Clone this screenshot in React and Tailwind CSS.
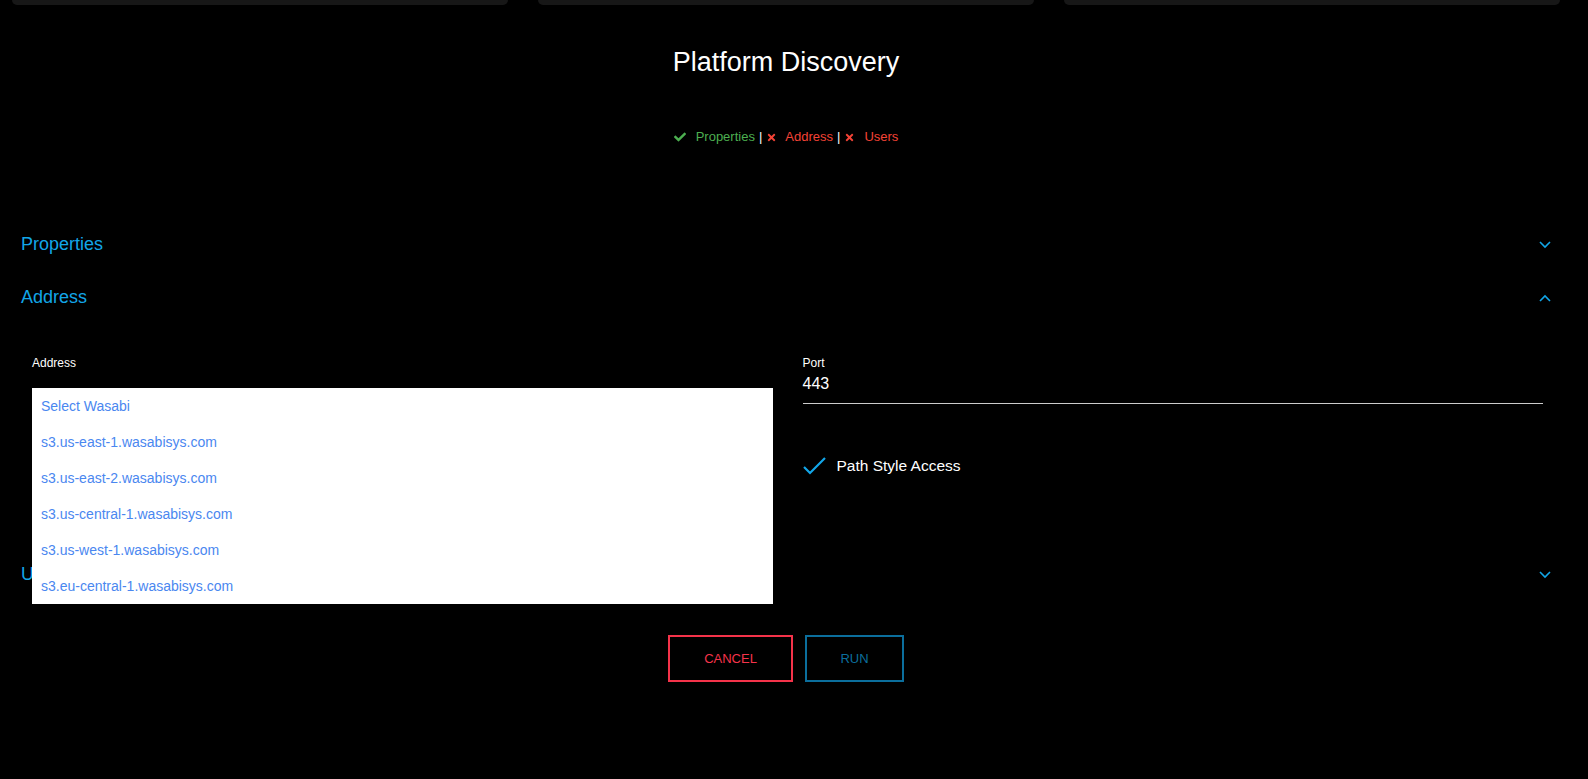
import { useState } from 'react'
import { FaCheck, FaTimes } from 'react-icons/fa'

const options = [
  'Select Wasabi',
  's3.us-east-1.wasabisys.com',
  's3.us-east-2.wasabisys.com',
  's3.us-central-1.wasabisys.com',
  's3.us-west-1.wasabisys.com',
  's3.eu-central-1.wasabisys.com',
]

const Chevron = ({ up }) => (
  <svg width="12" height="8" viewBox="0 0 12 8" className="text-[#12a6e8]">
    <polyline
      points={up ? '1,7 6,2 11,7' : '1,1 6,6 11,1'}
      fill="none"
      stroke="currentColor"
      strokeWidth="1.6"
    />
  </svg>
)

const SectionHeader = ({ title, open }) => (
  <div className="flex items-center justify-between h-[53px]">
    <span className="text-[18px] text-[#12a6e8]">{title}</span>
    <Chevron up={open} />
  </div>
)

const App = () => {
  const [pathStyle, setPathStyle] = useState(true)

  return (
    <div
      className="min-h-[779px] bg-black text-white overflow-hidden pr-[16px]"
      style={{ fontFamily: '"Liberation Sans", Arial, sans-serif' }}
    >
      <div className="flex gap-[30px] px-3">
        <div className="flex-1 h-[5px] rounded-b-lg bg-[#171717]"></div>
        <div className="flex-1 h-[5px] rounded-b-lg bg-[#171717]"></div>
        <div className="flex-1 h-[5px] rounded-b-lg bg-[#171717]"></div>
      </div>

      <h1 className="mt-[42px] text-center text-[27px] leading-[30px] text-white">
        Platform Discovery
      </h1>

      <div className="mt-[52px] flex items-center justify-center text-[13px] leading-[16px]">
        <FaCheck className="text-[#4caf50] mr-[10px]" size={12} />
        <span className="text-[#4caf50]">Properties</span>
        <span className="text-white mx-[4px]">|</span>
        <FaTimes className="text-[#f44336] mr-[8px]" size={11} />
        <span className="text-[#f44336]">Address</span>
        <span className="text-white mx-[4px]">|</span>
        <FaTimes className="text-[#f44336] mr-[9px]" size={11} />
        <span className="text-[#f44336]">Users</span>
      </div>

      <div className="mt-[73px] pl-[21px] pr-[21px]">
        <SectionHeader title="Properties" />
        <SectionHeader title="Address" open />

        <div className="pl-[11px] pr-[8px] pt-[32px] pb-[71px] grid grid-cols-2 gap-[30px]">
          <div className="relative">
            <label className="block text-[12px] leading-[14px] text-white">Address</label>
            <div className="h-[34px] border-b border-[#cccccc]"></div>
            <div className="absolute left-0 right-0 top-[32px] bg-white z-10">
              {options.map((o) => (
                <div key={o} className="h-[36px] flex items-center px-[9px] text-[14px] text-[#4a87f0]">
                  {o}
                </div>
              ))}
            </div>
          </div>
          <div>
            <label className="block text-[12px] leading-[14px] text-white">Port</label>
            <div className="h-[34px] border-b border-[#cccccc] flex items-end pb-[10px] text-[16px] leading-[18px]">
              443
            </div>
            <button
              onClick={() => setPathStyle(!pathStyle)}
              className="mt-[50px] flex items-center gap-[10px] text-[15.5px] text-white"
            >
              <svg width="24" height="20" viewBox="0 0 24 20">
                {pathStyle && (
                  <polyline points="1,11 7,17 22,2" fill="none" stroke="#12a6e8" strokeWidth="2.2" />
                )}
              </svg>
              Path Style Access
            </button>
          </div>
        </div>

        <SectionHeader title="Users" />
      </div>

      <div className="mt-[34px] flex justify-center gap-[12px] text-[13px]">
        <button className="w-[125px] h-[47px] border-2 border-[#f5334a] text-[#f5334a]">CANCEL</button>
        <button className="w-[99px] h-[47px] border-2 border-[#0b6e9c] text-[#0b6e9c]">RUN</button>
      </div>
    </div>
  )
}

export default App
